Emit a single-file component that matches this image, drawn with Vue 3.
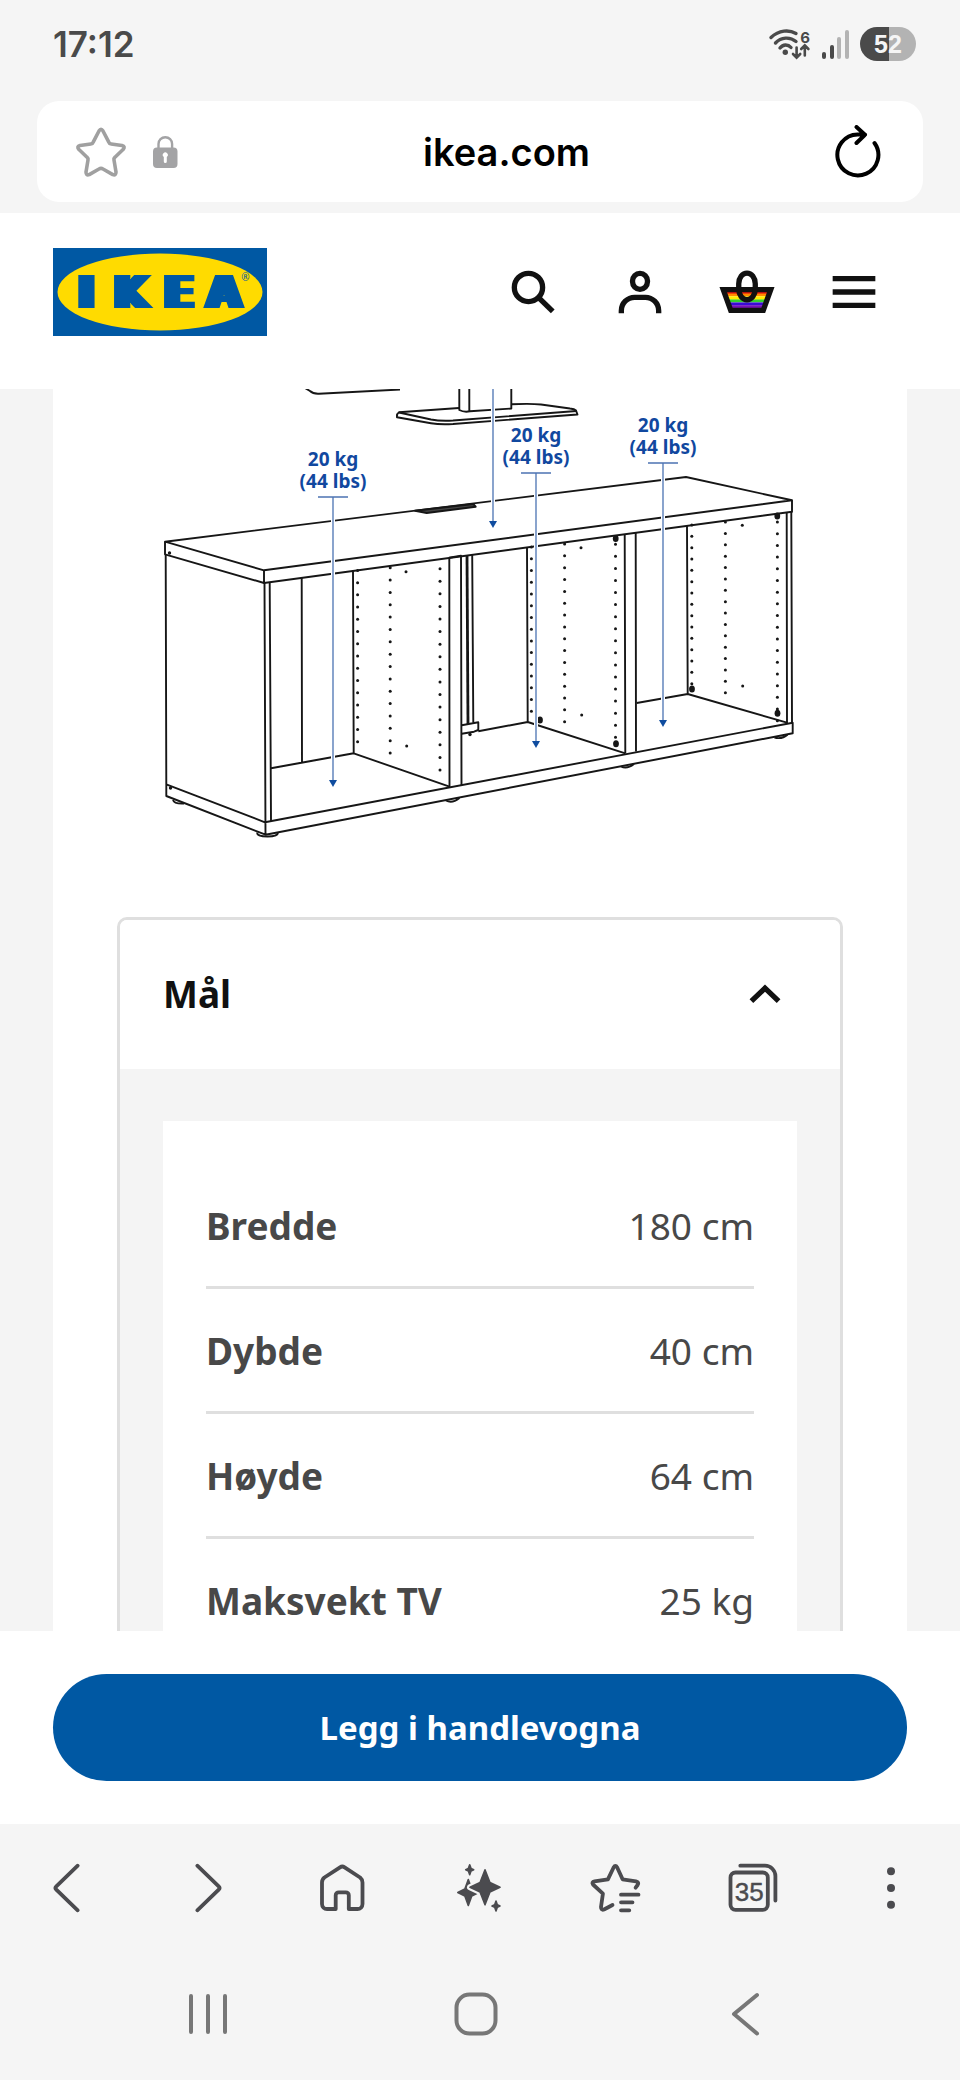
<script setup>
import { ref } from "vue";

const open = ref(true);

const measurements = [
  { name: "Bredde", value: "180 cm" },
  { name: "Dybde", value: "40 cm" },
  { name: "Høyde", value: "64 cm" },
  { name: "Maksvekt TV", value: "25 kg" },
];

const signalBars = [
  { x: 2, y: 24, on: true },
  { x: 10, y: 17, on: true },
  { x: 17, y: 9, on: false },
  { x: 25, y: 2, on: false },
];

// load arrows on the drawing
const loads = [
  { x: 333, top: 497, bottom: 787 },
  { x: 536, top: 473, bottom: 748 },
  { x: 663, top: 463, bottom: 727 },
];

const arrows = [...loads, { x: 493, top: 380, bottom: 528 }];

// shelf pin holes: columns of evenly spaced dots
const holeColumns = [
  { x: 357.6, from: 570.4, to: 741.7, count: 15 },
  { x: 390.2, from: 567.7, to: 753, count: 16 },
  { x: 440, from: 568.7, to: 770, count: 17 },
  { x: 531.4, from: 547, to: 711.3, count: 15 },
  { x: 564.6, from: 544, to: 721.7, count: 16 },
  { x: 615.5, from: 544.3, to: 737.3, count: 17 },
  { x: 691.8, from: 525, to: 683.7, count: 15 },
  { x: 725.4, from: 522, to: 692.7, count: 16 },
  { x: 777.4, from: 522, to: 720.7, count: 18 },
];

const holes = holeColumns.flatMap(({ x, from, to, count }) =>
  Array.from({ length: count }, (_, i) => ({ x, y: from + ((to - from) * i) / (count - 1) }))
);

holes.push(
  { x: 406, y: 571.7 },
  { x: 406.7, y: 746 },
  { x: 581, y: 547.7 },
  { x: 581.7, y: 715 },
  { x: 742.3, y: 525.3 },
  { x: 742.7, y: 686 }
);

const knobs = [
  { x: 615.7, y: 538.5 },
  { x: 616, y: 743.7 },
  { x: 540, y: 720 },
  { x: 777.3, y: 516 },
  { x: 777.5, y: 713.3 },
  { x: 692, y: 689 },
];

// four-pointed star with waists a, b away from its centre
const sparkle = (x, y, rx, ry) => {
  const a = rx * 0.33;
  const b = ry * 0.27;
  return (
    `M${x} ${y - ry} L${x + a} ${y - b} L${x + rx} ${y} L${x + a} ${y + b} ` +
    `L${x} ${y + ry} L${x - a} ${y + b} L${x - rx} ${y} L${x - a} ${y - b} Z`
  );
};
</script>

<template>
  <div class="phone">
    <div class="status-bar">
      <span class="time">17:12</span>
      <div class="status-icons">
        <svg class="wifi" width="44" height="32" viewBox="0 0 44 32">
          <g class="wifi-lines">
            <path d="M3 9.5 C11 2 21 1.5 28 5.5" />
            <path d="M7.5 15 C13 9 22 8.5 28 13.5" />
            <path d="M12 20 C15 16 20 16 23 19.5" />
          </g>
          <circle cx="17.3" cy="24.3" r="2.7" />
          <path class="wifi-arrows" d="M28.6 19.5 V29 M25 26 L28.6 29.6 L32.2 26 M36.8 27.5 V18 M33.2 21 L36.8 17.4 L40.4 21" />
          <text x="37" y="15" class="wifi-gen">6</text>
        </svg>
        <svg width="32" height="32" viewBox="0 0 32 32">
          <rect
            v-for="bar in signalBars"
            :key="bar.x"
            :x="bar.x"
            :y="bar.y"
            width="4"
            :height="31 - bar.y"
            rx="2"
            :class="bar.on ? 'bar-on' : 'bar-off'"
          />
        </svg>
        <div class="battery"><span>52</span></div>
      </div>
    </div>

    <div class="address-bar">
      <div class="address-left">
        <button class="plain" aria-label="Bokmerke">
          <svg width="52" height="52" viewBox="0 0 52 52" class="star">
            <path d="M24 5 Q26 1.600 28 5 L33.800 16.200 Q34.300 17.800 36.200 18 L47 19.500 Q50.500 20.500 48.300 23.300 L40 31.200 Q38.700 32.300 39 34 L41 46 Q41 49.800 37.800 48.600 L28 43 Q26 41.700 24 43 L14.200 48.600 Q11 49.800 11 46 L13 34 Q13.300 32.300 12 31.200 L3.700 23.300 Q1.500 20.500 5 19.500 L15.800 18 Q17.700 17.800 18.200 16.200 Z" />
          </svg>
        </button>
        <svg width="26" height="34" viewBox="0 0 26 34">
          <path d="M6.500 15 V9 a6.800 6.800 0 0 1 13.600 0 V15" class="shackle" />
          <path class="lock-body" fill-rule="evenodd" d="M5 12.500 H21.500 a4 4 0 0 1 4 4 V29 a4 4 0 0 1 -4 4 H5 a4 4 0 0 1 -4 -4 V16.500 a4 4 0 0 1 4 -4 Z M11.800 22 V26.500 a1.500 1.500 0 0 0 3 0 V22 a2.500 2.500 0 1 0 -3 0 Z" />
        </svg>
      </div>
      <span class="address">ikea.com</span>
      <button class="plain" aria-label="Last inn på nytt">
        <svg width="46" height="54" viewBox="0 0 46 54" class="reload">
          <path d="M39.500 18 A20.500 20.500 0 1 1 22.500 9.500 H30 M21.500 2 L30 9.700 L21.500 18" />
        </svg>
      </button>
    </div>

    <header class="site-header">
      <a href="#" class="logo" aria-label="IKEA">
        <svg width="214" height="88" viewBox="0 0 214 88">
          <defs>
            <filter id="widen" x="-10%" y="-10%" width="120%" height="120%">
              <feMorphology operator="dilate" radius="4 0" />
            </filter>
          </defs>
          <rect width="214" height="88" class="logo-blue" />
          <ellipse cx="107" cy="44" rx="102.500" ry="38.500" class="logo-yellow" />
          <text x="33.500 78 126 171" y="60" class="logo-text" filter="url(#widen)">IKEA</text>
          <text x="192.500" y="33" class="logo-mark">®</text>
        </svg>
      </a>
      <nav class="header-icons">
        <button class="plain" aria-label="Søk">
          <svg width="64" height="64" viewBox="0 0 24 24" class="line-icon">
            <circle cx="10.300" cy="10.300" r="5.300" />
            <path d="M14.200 14.200 L19.400 19.300" />
          </svg>
        </button>
        <button class="plain" aria-label="Profil">
          <svg width="64" height="64" viewBox="0 0 24 24" class="line-icon">
            <rect x="9.200" y="5" width="5.600" height="6" rx="2.800" />
            <path d="M5 20 V19 a5 5 0 0 1 5 -5 h4 a5 5 0 0 1 5 5 V20" />
          </svg>
        </button>
        <button class="plain" aria-label="Handlekurv">
          <svg width="64" height="64" viewBox="0 0 24 24" class="line-icon">
            <defs>
              <clipPath id="basket"><path d="M3 11 H21 L18 19 H6 Z" /></clipPath>
            </defs>
            <g clip-path="url(#basket)" class="rainbow">
              <rect x="2" y="11" width="20" height="2.200" fill="#e8160c" />
              <rect x="2" y="12.600" width="20" height="1" fill="#ff8c00" />
              <rect x="2" y="13.600" width="20" height="1.300" fill="#ffee00" />
              <rect x="2" y="14.800" width="20" height="1.100" fill="#35d02c" />
              <rect x="2" y="15.900" width="20" height="1.200" fill="#3a0bd6" />
              <rect x="2" y="17" width="20" height="2" fill="#7a12b8" />
            </g>
            <path d="M3.100 11.100 H20.900 L18.100 18.900 H5.900 Z" />
            <rect x="8.900" y="4.900" width="6.200" height="10" rx="3.100" ry="4" />
          </svg>
        </button>
        <button class="plain" aria-label="Meny">
          <svg width="64" height="64" viewBox="0 0 24 24" class="line-icon">
            <path d="M4 7 H20 M4 12 H20 M4 17 H20" />
          </svg>
        </button>
      </nav>
    </header>

    <main class="content">
      <div class="sheet">
        <svg class="drawing" viewBox="53 389 854 528" role="img" aria-label="Benk med maksvekt">
          <g class="outline">
            <!-- TV and stand -->
            <path d="M305 388 L310 391 Q313 394 319 393.700 L400 389.500" />
            <path d="M459.300 388 V410 Q464 412.500 470 411.300 L511.300 408.500 V388 M469.300 388 V411.500" />
            <path d="M459 408 L399 412.300 Q396.500 414 397 417.300 L431 423.300 Q440 424.700 453 424 L577.500 414.500 L576 410.500 Q574.500 409 570 408.500 L541 404.500 Q530 403.300 511.500 404.300" />
            <path d="M399 412.500 L431 419.500 Q440 421.200 453 420.500 L576.500 411" />
            <!-- top -->
            <path d="M165 541.700 L686 477 L792 500.300 L264 570.300 Z" />
            <path d="M165 541.700 V554.300 L264 583 L792 511.700 V500.300 M264 570.300 V583" />
            <path class="slot" d="M415 510.700 L473.300 504 L475.700 506.700 L426.700 513 Z" />
            <!-- side and base -->
            <path d="M165.700 554.500 L166.300 784.300 V796 L265.500 834.700 L792.700 733.300 V722.700 L265 822.300 L166.300 784.300 M264.500 583 L265.500 834.700" />
            <path d="M269.700 582.300 L271 821 M791.300 511.800 L792 722.700 M786.700 512.500 L787 723.700" />
            <!-- left compartment -->
            <path d="M301.700 578 L302 762.500 M353 571 L353.700 753.300 M271 768.300 L353.700 753.300 L449.500 786.700" />
            <path d="M449.300 558 L449.500 787.500 M449 557.700 L461 555.700 L461.500 785" />
            <!-- middle compartment -->
            <path class="rail" d="M467 555 L468 724" />
            <path d="M472.200 554.300 L473.300 723.500 M461.700 725.300 L478.300 722.300 V730 L474 731.700 L461.700 733.700" />
            <path d="M478.300 731.300 L527.700 722 L625.300 753.300 M527 547.300 L527.700 722" />
            <path d="M624.700 534 L625.300 753.500 M635.700 532.700 L636 751.500" />
            <!-- right compartment -->
            <path d="M687 525.700 L687.700 694 M636.700 703 L687.700 694 L787 722.700" />
            <!-- feet -->
            <path d="M173 800 Q174 804 184 803.500 M257 832.500 Q257 836.500 267.500 836.500 Q278 836.500 278 832.500 M446 800.500 Q452 804 459.500 798 M621 766.500 Q627 769.500 634 764 M774.500 737.500 Q782 739.500 787.500 734.700" />
          </g>
          <g class="ink">
            <circle v-for="(hole, i) in holes" :key="i" :cx="hole.x" :cy="hole.y" r="1.500" />
            <ellipse v-for="(knob, i) in knobs" :key="'k' + i" :cx="knob.x" :cy="knob.y" rx="2.900" ry="3.500" />
            <circle cx="169.500" cy="553" r="1.700" />
            <circle cx="170.500" cy="788" r="1.700" />
            <circle cx="470" cy="734.500" r="1.700" />
          </g>
          <g v-for="arrow in arrows" :key="arrow.x">
            <path class="halo" :d="`M${arrow.x} ${arrow.top} V${arrow.bottom - 6}`" />
            <path class="arrow-line" :d="`M${arrow.x} ${arrow.top} V${arrow.bottom - 6} M${arrow.x - 15} ${arrow.top} h30`" />
            <path class="arrow-head" :d="`M${arrow.x - 4} ${arrow.bottom - 7} h8 l-4 7 Z`" />
          </g>
          <g class="load-label">
            <template v-for="load in loads" :key="load.x">
              <text :x="load.x" :y="load.top - 31">20 kg</text>
              <text :x="load.x" :y="load.top - 9">(44 lbs)</text>
            </template>
          </g>
        </svg>

        <section class="accordion">
          <h2 class="accordion-title">
            <button class="accordion-header" :aria-expanded="open" @click="open = !open">
              <span>Mål</span>
              <svg width="64" height="64" viewBox="0 0 24 24" class="line-icon chevron" :class="{ closed: !open }">
                <path d="M6.900 14.700 L12 9.800 L17.100 14.700" />
              </svg>
            </button>
          </h2>
          <div v-show="open" class="accordion-content">
            <div class="table-card">
              <table>
                <tbody>
                  <tr v-for="row in measurements" :key="row.name">
                    <th scope="row">{{ row.name }}</th>
                    <td>{{ row.value }}</td>
                  </tr>
                </tbody>
              </table>
            </div>
          </div>
        </section>
      </div>
    </main>

    <div class="buy-bar">
      <button class="buy-button">Legg i handlevogna</button>
    </div>

    <nav class="toolbar">
      <button class="plain" aria-label="Tilbake">
        <svg width="56" height="56" viewBox="0 0 56 56"><path d="M36.700 5.700 L15.300 26.300 Q13.600 28 15.300 29.700 L36.700 50.300" /></svg>
      </button>
      <button class="plain" aria-label="Frem">
        <svg width="56" height="56" viewBox="0 0 56 56"><path d="M19.300 5.700 L40.700 26.300 Q42.400 28 40.700 29.700 L19.300 50.300" /></svg>
      </button>
      <button class="plain" aria-label="Hjem">
        <svg width="56" height="56" viewBox="0 0 56 56">
          <path d="M20.700 49 H12 a5 5 0 0 1 -5 -5 V22.500 q0 -3 2.400 -5 L25 7.300 q2.300 -1.500 4.600 0 L45.100 17.500 q2.400 2 2.400 5 V44 a5 5 0 0 1 -5 5 H33.800 V35.300 a3 3 0 0 0 -3 -3 H23.700 a3 3 0 0 0 -3 3 Z" />
        </svg>
      </button>
      <button class="plain" aria-label="Assistent">
        <svg width="56" height="56" viewBox="0 0 56 56" class="sparkles">
          <path :d="sparkle(17.7, 9.7, 4, 5)" />
          <path :d="sparkle(16.3, 32.5, 10.5, 13)" />
          <path :d="sparkle(33, 27.3, 15, 17.5)" class="sparkle-gap" />
          <path :d="sparkle(33, 27.3, 15, 17.5)" />
          <path :d="sparkle(44, 46, 4, 5)" />
        </svg>
      </button>
      <button class="plain" aria-label="Bokmerker">
        <svg width="56" height="56" viewBox="0 0 56 56">
          <path d="M46.600 27.700 L48.600 25 Q50.500 22.200 47 21.400 L33.600 19.300 L28.200 7.500 Q26.400 4.500 24.600 7.500 L18.900 19.300 L5.500 21.400 Q2.300 22 4 24.500 L13.900 33.700 L12 47 Q12 50.500 15 49.500 L23.500 45 M32 34.700 H49.500 M32 42.300 H43.500 M32 50.300 H40.300" />
        </svg>
      </button>
      <button class="plain" aria-label="Faner">
        <svg width="56" height="56" viewBox="0 0 56 56">
          <rect x="4.500" y="12.500" width="37.300" height="37.300" rx="5" />
          <path d="M14.300 5.700 H39 a10.400 10.400 0 0 1 10.400 10.400 V40.500" />
          <text x="23.200" y="40.500" class="tab-count">35</text>
        </svg>
      </button>
      <button class="plain" aria-label="Mer">
        <svg width="56" height="56" viewBox="0 0 56 56" class="more">
          <circle cx="28" cy="11.300" r="4" />
          <circle cx="28" cy="28" r="4" />
          <circle cx="28" cy="44.700" r="4" />
        </svg>
      </button>
    </nav>

    <nav class="system-nav">
      <button class="plain" aria-label="Nylige apper">
        <svg width="48" height="48" viewBox="0 0 48 48"><path d="M7 6 V42 M24 6 V42 M41 6 V42" /></svg>
      </button>
      <button class="plain" aria-label="Startskjerm">
        <svg width="48" height="48" viewBox="0 0 48 48"><rect x="4.500" y="4.500" width="39" height="39" rx="13" /></svg>
      </button>
      <button class="plain" aria-label="Gå tilbake">
        <svg width="48" height="48" viewBox="0 0 48 48"><path d="M36 5 L13 24 L36 43.500" /></svg>
      </button>
    </nav>
  </div>
</template>

<style>
body {
  margin: 0;
  background: #f5f5f5;
}
</style>

<style scoped>
.phone {
  display: flex;
  flex-direction: column;
  height: 100vh;
  background: #f5f5f5;
  font-family: "Noto Sans", sans-serif;
  color: #111;
}

button {
  font-family: inherit;
  cursor: pointer;
}

svg {
  display: block;
}

.plain {
  display: flex;
  align-items: center;
  justify-content: center;
  padding: 0;
  border: none;
  background: none;
}

/* status bar */
.status-bar {
  flex: none;
  display: flex;
  align-items: center;
  justify-content: space-between;
  height: 88px;
  padding: 0 44px 13px 53px;
}

.time {
  font-family: Inter, sans-serif;
  font-size: 35px;
  font-weight: 600;
  color: #4a4a4a;
}

.status-icons {
  display: flex;
  align-items: center;
  gap: 8px;
}

.wifi {
  fill: #4a4a4a;
}

.wifi-lines,
.wifi-arrows {
  fill: none;
  stroke: #4a4a4a;
  stroke-width: 3.4;
  stroke-linecap: round;
}

.wifi-arrows {
  stroke-width: 2.6;
}

.wifi-gen {
  font: 700 15px Inter, sans-serif;
  text-anchor: middle;
}

.bar-on {
  fill: #4a4a4a;
}

.bar-off {
  fill: #b3b3b3;
}

.battery {
  display: flex;
  align-items: center;
  justify-content: center;
  width: 56px;
  height: 34px;
  border-radius: 17px;
  background: linear-gradient(to right, #4a4a4a 51%, #b3b3b3 51%);
  color: #f5f5f5;
  font: 700 25px "Liberation Sans", sans-serif;
}

/* address bar */
.address-bar {
  flex: none;
  display: flex;
  align-items: center;
  justify-content: space-between;
  height: 101px;
  margin: 0 37px 11px;
  padding: 0 42px 0 38px;
  box-sizing: border-box;
  border-radius: 22px;
  background: #fff;
}

.address-left {
  display: flex;
  align-items: center;
  gap: 25px;
}

.star {
  fill: none;
  stroke: #a0a0a0;
  stroke-width: 3.6;
  stroke-linejoin: round;
}

.shackle {
  fill: none;
  stroke: #a3a3a5;
  stroke-width: 2.4;
}

.lock-body {
  fill: #a3a3a5;
}

.address {
  font-family: Inter, sans-serif;
  font-size: 38px;
  font-weight: 600;
  color: #000;
}

.reload {
  fill: none;
  stroke: #000;
  stroke-width: 4;
  stroke-linecap: round;
  stroke-linejoin: round;
}

/* site header */
.site-header {
  flex: none;
  display: flex;
  align-items: center;
  justify-content: space-between;
  padding: 35px 53px 53px;
  background: #fff;
}

.logo-blue {
  fill: #0058a3;
}

.logo-yellow {
  fill: #ffdb00;
}

.logo-text {
  font: 700 44px "DejaVu Sans", sans-serif;
  text-anchor: middle;
  fill: #0058a3;
}

.logo-mark {
  font: 400 10px "Noto Sans", sans-serif;
  text-anchor: middle;
  fill: #0058a3;
}

.header-icons {
  display: flex;
}

.header-icons button {
  width: 107px;
}

.line-icon {
  fill: none;
  stroke: #111;
  stroke-width: 2;
}

.rainbow {
  stroke: none;
}

/* page content */
.content {
  flex: 1;
  min-height: 0;
  overflow-y: auto;
  scrollbar-width: none;
  background: #f4f4f4;
}

.sheet {
  margin: 0 53px;
  background: #fff;
}

.drawing {
  width: 100%;
  height: auto;
}

.outline {
  fill: none;
  stroke: #161616;
  stroke-width: 1.9;
  stroke-linejoin: round;
}

.outline .slot {
  fill: #444;
}

.outline .rail {
  stroke-width: 2.8;
}

.ink {
  fill: #161616;
}

.halo {
  stroke: #fff;
  stroke-width: 4;
}

.arrow-line {
  fill: none;
  stroke: #4c73b3;
  stroke-width: 1.3;
}

.arrow-head {
  fill: #0f4c9f;
}

.load-label {
  font: 700 19px "Noto Sans", sans-serif;
  text-anchor: middle;
  fill: #11489f;
}

/* accordion */
.accordion {
  margin: 0 64px;
  border: 3px solid #dfdfdf;
  border-radius: 10px;
  overflow: hidden;
}

.accordion-title {
  margin: 0;
}

.accordion-header {
  display: flex;
  align-items: center;
  justify-content: space-between;
  width: 100%;
  height: 149px;
  padding: 0 43px 2px;
  border: none;
  background: #fff;
  color: #111;
  font-size: 37px;
  font-weight: 700;
}

.chevron.closed {
  transform: rotate(180deg);
}

.accordion-content {
  padding: 52px 43px;
  background: #f4f4f4;
}

.table-card {
  padding: 43px;
  background: #fff;
}

table {
  width: 100%;
  border-spacing: 0;
  color: #484848;
  font-size: 37px;
}

th,
td {
  height: 122px;
  padding: 0;
  border-bottom: 3px solid #dfdfdf;
}

th {
  text-align: left;
  font-weight: 700;
}

td {
  text-align: right;
}

/* buy bar */
.buy-bar {
  flex: none;
  padding: 43px 53px;
  background: #fff;
}

.buy-button {
  display: block;
  width: 100%;
  height: 107px;
  border: none;
  border-radius: 54px;
  background: #0058a3;
  color: #fff;
  font-size: 33px;
  font-weight: 700;
}

/* browser toolbar */
.toolbar {
  flex: none;
  display: flex;
  height: 128px;
  fill: none;
  stroke: #4b4b4f;
  stroke-width: 3.8;
  stroke-linecap: round;
  stroke-linejoin: round;
}

.toolbar button {
  flex: 1;
}

.more {
  fill: #4b4b4f;
  stroke: none;
}

.sparkles {
  fill: #4b4b4f;
  stroke-width: 1.6;
}

.sparkle-gap {
  fill: #f5f5f5;
  stroke: #f5f5f5;
  stroke-width: 6;
}

.tab-count {
  font: 400 26px "Liberation Sans", sans-serif;
  text-anchor: middle;
  fill: #4b4b4f;
  stroke-width: 0.4;
}

.system-nav {
  flex: none;
  display: flex;
  height: 124px;
  padding: 0 81px 4px 74px;
  fill: none;
  stroke: #777;
  stroke-width: 4;
  stroke-linecap: round;
  stroke-linejoin: round;
}

.system-nav button {
  flex: 1;
}
</style>
